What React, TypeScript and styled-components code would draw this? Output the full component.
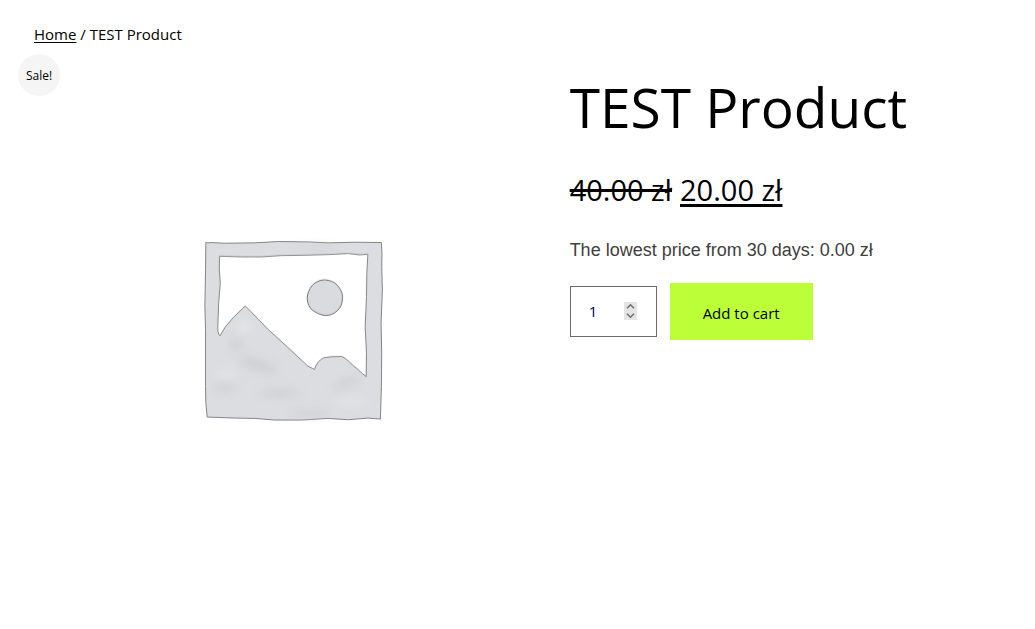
import React, { useState } from 'react';
import styled, { createGlobalStyle } from 'styled-components';

const GlobalStyle = createGlobalStyle`
  *, *::before, *::after { box-sizing: border-box; }
  body {
    margin: 0;
    background: #fff;
    color: #000;
    font-family: 'Segoe UI', 'Open Sans', 'Noto Sans', sans-serif;
    font-size: 15px;
    font-weight: 400;
    line-height: 24px;
  }
`;

const Page = styled.main`
  padding: 22px 34px;
`;

const Breadcrumb = styled.nav`
  margin-bottom: 26px;
  a { color: inherit; text-underline-offset: 2px; }
`;

const Product = styled.section`
  display: grid;
  grid-template-columns: 6fr 5fr;
  gap: 18px;
  align-items: start;
`;

const Gallery = styled.div`
  position: relative;
`;

const SaleBadge = styled.span`
  position: absolute;
  top: -18px;
  left: -16px;
  width: 42px;
  height: 42px;
  border-radius: 50%;
  background: #f5f5f5;
  font-size: 12px;
  line-height: 44px;
  text-align: center;
`;

const Picture = styled.svg`
  display: block;
  width: 100%;
  height: auto;
`;

const Title = styled.h1`
  margin: 0 0 30px;
  font-size: 55px;
  font-weight: inherit;
  line-height: 70px;
`;

const Price = styled.p`
  margin: 0 0 30px;
  font-size: 29px;
  line-height: 36px;
  white-space: nowrap;
  del { margin-right: 8px; text-decoration-thickness: 3px; }
  ins { text-decoration-thickness: 3px; text-underline-offset: 3px; }
`;

const LowestPrice = styled.p`
  margin: 0 0 21px;
  color: #404040;
  font-family: 'Liberation Sans', Arial, sans-serif;
  font-size: 18px;
  line-height: 24px;
`;

const CartForm = styled.form`
  display: flex;
  align-items: center;
  gap: 13px;
`;

const QuantityBox = styled.div`
  display: flex;
  align-items: center;
  width: 87px;
  height: 51px;
  padding: 0 19px 2px 18px;
  border: 1px solid #6b6b6b;
`;

const QuantityInput = styled.input`
  flex: 1;
  min-width: 0;
  padding: 0;
  border: 0;
  outline: 0;
  background: none;
  color: #00006b;
  font: inherit;
  appearance: textfield;
  &::-webkit-inner-spin-button, &::-webkit-outer-spin-button {
    appearance: none;
    margin: 0;
  }
`;

const Stepper = styled.div`
  display: flex;
  flex-direction: column;
  width: 13px;
  background: #e4e4e4;
`;

const StepButton = styled.button`
  display: block;
  height: 9px;
  padding: 0;
  border: 0;
  background: none;
  svg { display: block; width: 13px; height: 9px; }
`;

const AddButton = styled.button`
  height: 57px;
  padding: 2px 33px 0;
  border: 0;
  background: #bcff38;
  color: #000;
  font: inherit;
  cursor: pointer;
`;

function PlaceholderPicture() {
  const body =
    'M33 37 Q38 41 46 38 L90 40 L180 39 L250 35 L340 36 L400 39 L480 37 L560 38 Q563 70 561 110 L563 180 L559 280 L561 370 L560 470 L557 568 L520 565 L460 570 L400 566 L320 571 L240 571 L180 566 L120 565 L37 562 Q31 520 32 470 L32 300 L30 230 L32 120 Z';
  const opening =
    'M74 79 L140 81 L200 81 L260 77 L330 76 L400 74 L460 71 L495 75 L519 73 L516 130 L515 200 L511 290 L515 370 L514 440 Q502 432 492 421 Q475 408 462 395 Q450 383 441 380 Q410 379 386 384 Q365 395 359 419 Q337 411 322 393 L276 350 L220 299 L190 268 Q170 247 151 228 L115 263 Q88 291 75 318 Q66 310 69 280 L71 220 L76 160 L73 120 Z';
  const sun =
    'M389 150 C404 151 418 155 427 166 C437 177 444 190 443 205 C443 221 437 234 427 243 C417 253 404 257 391 257 C377 256 365 249 354 242 C343 235 338 221 337 206 C337 191 343 178 352 167 C361 156 374 151 389 150 Z';
  return (
    <Picture viewBox="0 0 518 518" role="img" aria-label="Awaiting product image">
      <defs>
        <filter id="wash" x="0" y="0" width="600" height="600" filterUnits="userSpaceOnUse">
          <feGaussianBlur stdDeviation="13" />
        </filter>
      </defs>
      <g transform="translate(161 158) scale(.3333)" stroke="#858588" strokeWidth="3" strokeLinejoin="round">
        <path d={body} fill="#dcdde1" />
        <g stroke="none" fill="#cdced3" filter="url(#wash)">
          <ellipse cx="125" cy="345" rx="18" ry="14" />
          <ellipse cx="190" cy="405" rx="60" ry="14" transform="rotate(15 190 405)" />
          <ellipse cx="90" cy="475" rx="35" ry="9" />
          <ellipse cx="255" cy="490" rx="60" ry="10" />
          <ellipse cx="455" cy="460" rx="45" ry="9" transform="rotate(-18 455 460)" />
          <ellipse cx="350" cy="550" rx="60" ry="7" />
          <ellipse cx="365" cy="54" rx="60" ry="5" />
        </g>
        <g stroke="none" fill="#e3e4e7" filter="url(#wash)">
          <ellipse cx="150" cy="290" rx="25" ry="20" />
          <ellipse cx="95" cy="430" rx="35" ry="12" />
          <ellipse cx="470" cy="515" rx="55" ry="10" />
        </g>
        <path d={opening} fill="#fff" />
        <path d={sun} fill="#dadbdf" stroke="#707073" />
      </g>
    </Picture>
  );
}

export default function App() {
  const [quantity, setQuantity] = useState(1);
  return (
    <>
      <GlobalStyle />
      <Page>
        <Breadcrumb aria-label="Breadcrumb">
          <a href="#home">Home</a> / TEST Product
        </Breadcrumb>
        <Product>
          <Gallery>
            <PlaceholderPicture />
            <SaleBadge>Sale!</SaleBadge>
          </Gallery>
          <div>
            <Title>TEST Product</Title>
            <Price>
              <del>40.00 zł</del>
              <ins>20.00 zł</ins>
            </Price>
            <LowestPrice>The lowest price from 30 days: 0.00 zł</LowestPrice>
            <CartForm onSubmit={(e) => e.preventDefault()}>
              <QuantityBox>
                <QuantityInput
                  type="number"
                  min={1}
                  aria-label="Product quantity"
                  value={quantity}
                  onChange={(e) => setQuantity(Number(e.target.value))}
                />
                <Stepper>
                  <StepButton type="button" aria-label="Increase" onClick={() => setQuantity(quantity + 1)}>
                    <svg viewBox="0 0 13 9" fill="none" stroke="#6e6e6e" strokeWidth="1.6">
                      <path d="M3 6.2 L6.5 2.8 L10 6.2" />
                    </svg>
                  </StepButton>
                  <StepButton type="button" aria-label="Decrease" onClick={() => setQuantity(Math.max(1, quantity - 1))}>
                    <svg viewBox="0 0 13 9" fill="none" stroke="#6e6e6e" strokeWidth="1.6">
                      <path d="M3 2.8 L6.5 6.2 L10 2.8" />
                    </svg>
                  </StepButton>
                </Stepper>
              </QuantityBox>
              <AddButton type="submit">Add to cart</AddButton>
            </CartForm>
          </div>
        </Product>
      </Page>
    </>
  );
}
